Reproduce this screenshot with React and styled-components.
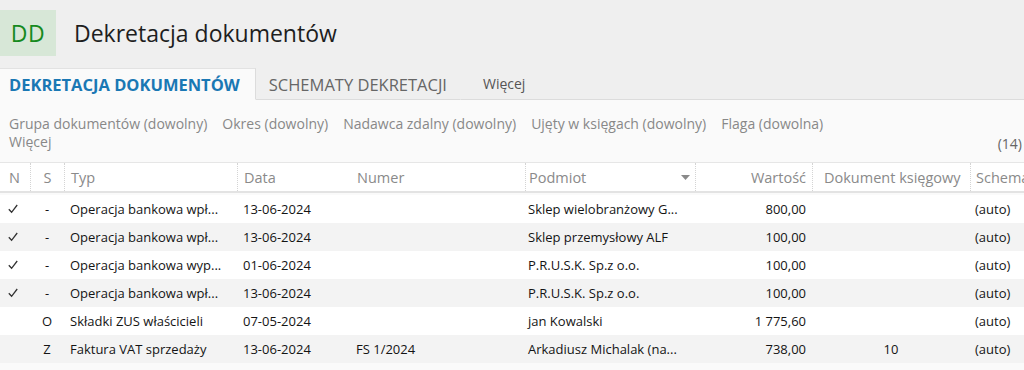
import React from 'react';
import styled, { createGlobalStyle } from 'styled-components';

const GlobalStyle = createGlobalStyle`
  html, body {
    margin: 0;
    padding: 0;
    background: #fafafa;
    font-family: "Open Sans", "Noto Sans", sans-serif;
    overflow: hidden;
  }
`;

const Page = styled.div`
  width: 1024px;
  height: 370px;
  overflow: hidden;
  background: #fafafa;
`;

const TopBar = styled.div`
  display: flex;
  align-items: center;
  height: 68px;
  background: #efefef;
`;

const Badge = styled.div`
  width: 56px;
  height: 46px;
  display: flex;
  align-items: center;
  justify-content: center;
  background: #d7e7d7;
  color: #168a1e;
  font-size: 23px;
  letter-spacing: 0.5px;
  margin-top: -2px;
`;

const Title = styled.h1`
  margin: -2px 0 0 18px;
  font-size: 23px;
  font-weight: 400;
  color: #1e1e1e;
`;

const TabBar = styled.div`
  display: flex;
  align-items: stretch;
  height: 32px;
  background: #efefef;
`;

const Tab = styled.div`
  display: flex;
  align-items: center;
  padding: 0 ${p => (p.$active ? '15px' : '13px')} 0 ${p => (p.$active ? '9px' : '13px')};
  font-size: 16.5px;
  font-weight: ${p => (p.$active ? 700 : 400)};
  color: ${p => (p.$active ? '#1a78b4' : '#666')};
  background: ${p => (p.$active ? '#fafafa' : '#efefef')};
  border-top: 1px solid ${p => (p.$active ? '#e2e2e2' : 'transparent')};
  border-right: 1px solid ${p => (p.$active ? '#dcdcdc' : 'transparent')};
  border-bottom: 1px solid ${p => (p.$active ? 'transparent' : '#dcdcdc')};
  white-space: nowrap;
`;

const TabMore = styled.div`
  display: flex;
  align-items: center;
  flex: 1;
  padding-left: 22px;
  font-size: 14px;
  color: #555;
  border-bottom: 1px solid #dcdcdc;
`;

const Filters = styled.div`
  position: relative;
  height: 62px;
  padding: 15px 9px 0;
  box-sizing: border-box;
  font-size: 14px;
  color: #888;
  line-height: 18px;
`;

const FilterRow = styled.div`
  display: flex;
  gap: 15px;
  white-space: nowrap;
`;

const Count = styled.span`
  position: absolute;
  right: 2px;
  top: 35px;
  font-size: 14px;
  color: #666;
`;

const cols = '30px 34px 173px 113px 175px 170px 117px 158px 120px';

const Grid = styled.div`
  display: grid;
  grid-template-columns: ${cols};
  width: 1110px;
`;

const HeaderRow = styled(Grid)`
  height: 28px;
  background: #fff;
  border-top: 1px solid #e6e6e6;
  border-bottom: 2px solid #e3e3e3;
  margin-bottom: 2px;
`;

const HeadCell = styled.div`
  display: flex;
  align-items: center;
  justify-content: ${p => (p.$align === 'right' ? 'flex-end' : p.$align === 'center' ? 'center' : 'space-between')};
  padding: 0 ${p => p.$pr ?? 6}px 0 ${p => p.$pl ?? 6}px;
  font-size: 14.5px;
  color: #8a8a8a;
  border-left: 1px dotted ${p => (p.$sep ? '#d4d4d4' : 'transparent')};
  white-space: nowrap;
  overflow: hidden;
`;

const Row = styled(Grid)`
  height: 28px;
  background: ${p => (p.$alt ? '#f3f3f3' : '#fff')};
`;

const Cell = styled.div`
  display: flex;
  align-items: center;
  justify-content: ${p => (p.$align === 'right' ? 'flex-end' : p.$align === 'center' ? 'center' : 'flex-start')};
  padding: 0 ${p => p.$pr ?? 6}px 0 ${p => p.$pl ?? 6}px;
  font-size: 13px;
  color: #141414;
  white-space: nowrap;
  overflow: hidden;
`;

const Check = () => (
  <svg width="10" height="10" viewBox="0 0 10 10">
    <path d="M0.8 5.2 L3.6 8.3 L9.2 1" fill="none" stroke="#333" strokeWidth="1.3" />
  </svg>
);

const SortArrow = () => (
  <svg width="9" height="5" viewBox="0 0 9 5">
    <path d="M0 0 H9 L4.5 5 Z" fill="#8a8a8a" />
  </svg>
);

const rows = [
  { n: true, s: '-', typ: 'Operacja bankowa wpł...', data: '13-06-2024', numer: '', podmiot: 'Sklep wielobranżowy G...', wartosc: '800,00', dok: '' },
  { n: true, s: '-', typ: 'Operacja bankowa wpł...', data: '13-06-2024', numer: '', podmiot: 'Sklep przemysłowy ALF', wartosc: '100,00', dok: '' },
  { n: true, s: '-', typ: 'Operacja bankowa wyp...', data: '01-06-2024', numer: '', podmiot: 'P.R.U.S.K. Sp.z o.o.', wartosc: '100,00', dok: '' },
  { n: true, s: '-', typ: 'Operacja bankowa wpł...', data: '13-06-2024', numer: '', podmiot: 'P.R.U.S.K. Sp.z o.o.', wartosc: '100,00', dok: '' },
  { n: false, s: 'O', typ: 'Składki ZUS właścicieli', data: '07-05-2024', numer: '', podmiot: 'jan Kowalski', wartosc: '1 775,60', dok: '' },
  { n: false, s: 'Z', typ: 'Faktura VAT sprzedaży', data: '13-06-2024', numer: 'FS 1/2024', podmiot: 'Arkadiusz Michalak (na...', wartosc: '738,00', dok: '10' },
];

export default function App() {
  return (
    <Page>
      <GlobalStyle />
      <TopBar>
        <Badge>DD</Badge>
        <Title>Dekretacja dokumentów</Title>
      </TopBar>
      <TabBar>
        <Tab $active>DEKRETACJA DOKUMENTÓW</Tab>
        <Tab>SCHEMATY DEKRETACJI</Tab>
        <TabMore>Więcej</TabMore>
      </TabBar>
      <Filters>
        <FilterRow>
          <span>Grupa dokumentów (dowolny)</span>
          <span>Okres (dowolny)</span>
          <span>Nadawca zdalny (dowolny)</span>
          <span>Ujęty w księgach (dowolny)</span>
          <span>Flaga (dowolna)</span>
        </FilterRow>
        <div>Więcej</div>
        <Count>(14)</Count>
      </Filters>
      <HeaderRow>
        <HeadCell $pl={8}>N</HeadCell>
        <HeadCell $sep $align="center">S</HeadCell>
        <HeadCell $sep>Typ</HeadCell>
        <HeadCell $sep>Data</HeadCell>
        <HeadCell>Numer</HeadCell>
        <HeadCell $sep $pl={3} $pr={5}>Podmiot<SortArrow /></HeadCell>
        <HeadCell $sep $align="right">Wartość</HeadCell>
        <HeadCell $sep $pl={11}>Dokument księgowy</HeadCell>
        <HeadCell $sep $pl={5}>Schemat</HeadCell>
      </HeaderRow>
      {rows.map((r, i) => (
        <Row key={i} $alt={i % 2 === 1}>
          <Cell $pl={8}>{r.n && <Check />}</Cell>
          <Cell $align="center">{r.s}</Cell>
          <Cell>{r.typ}</Cell>
          <Cell>{r.data}</Cell>
          <Cell>{r.numer}</Cell>
          <Cell $pl={3}>{r.podmiot}</Cell>
          <Cell $align="right">{r.wartosc}</Cell>
          <Cell $align="center">{r.dok}</Cell>
          <Cell $pl={5}>(auto)</Cell>
        </Row>
      ))}
    </Page>
  );
}
